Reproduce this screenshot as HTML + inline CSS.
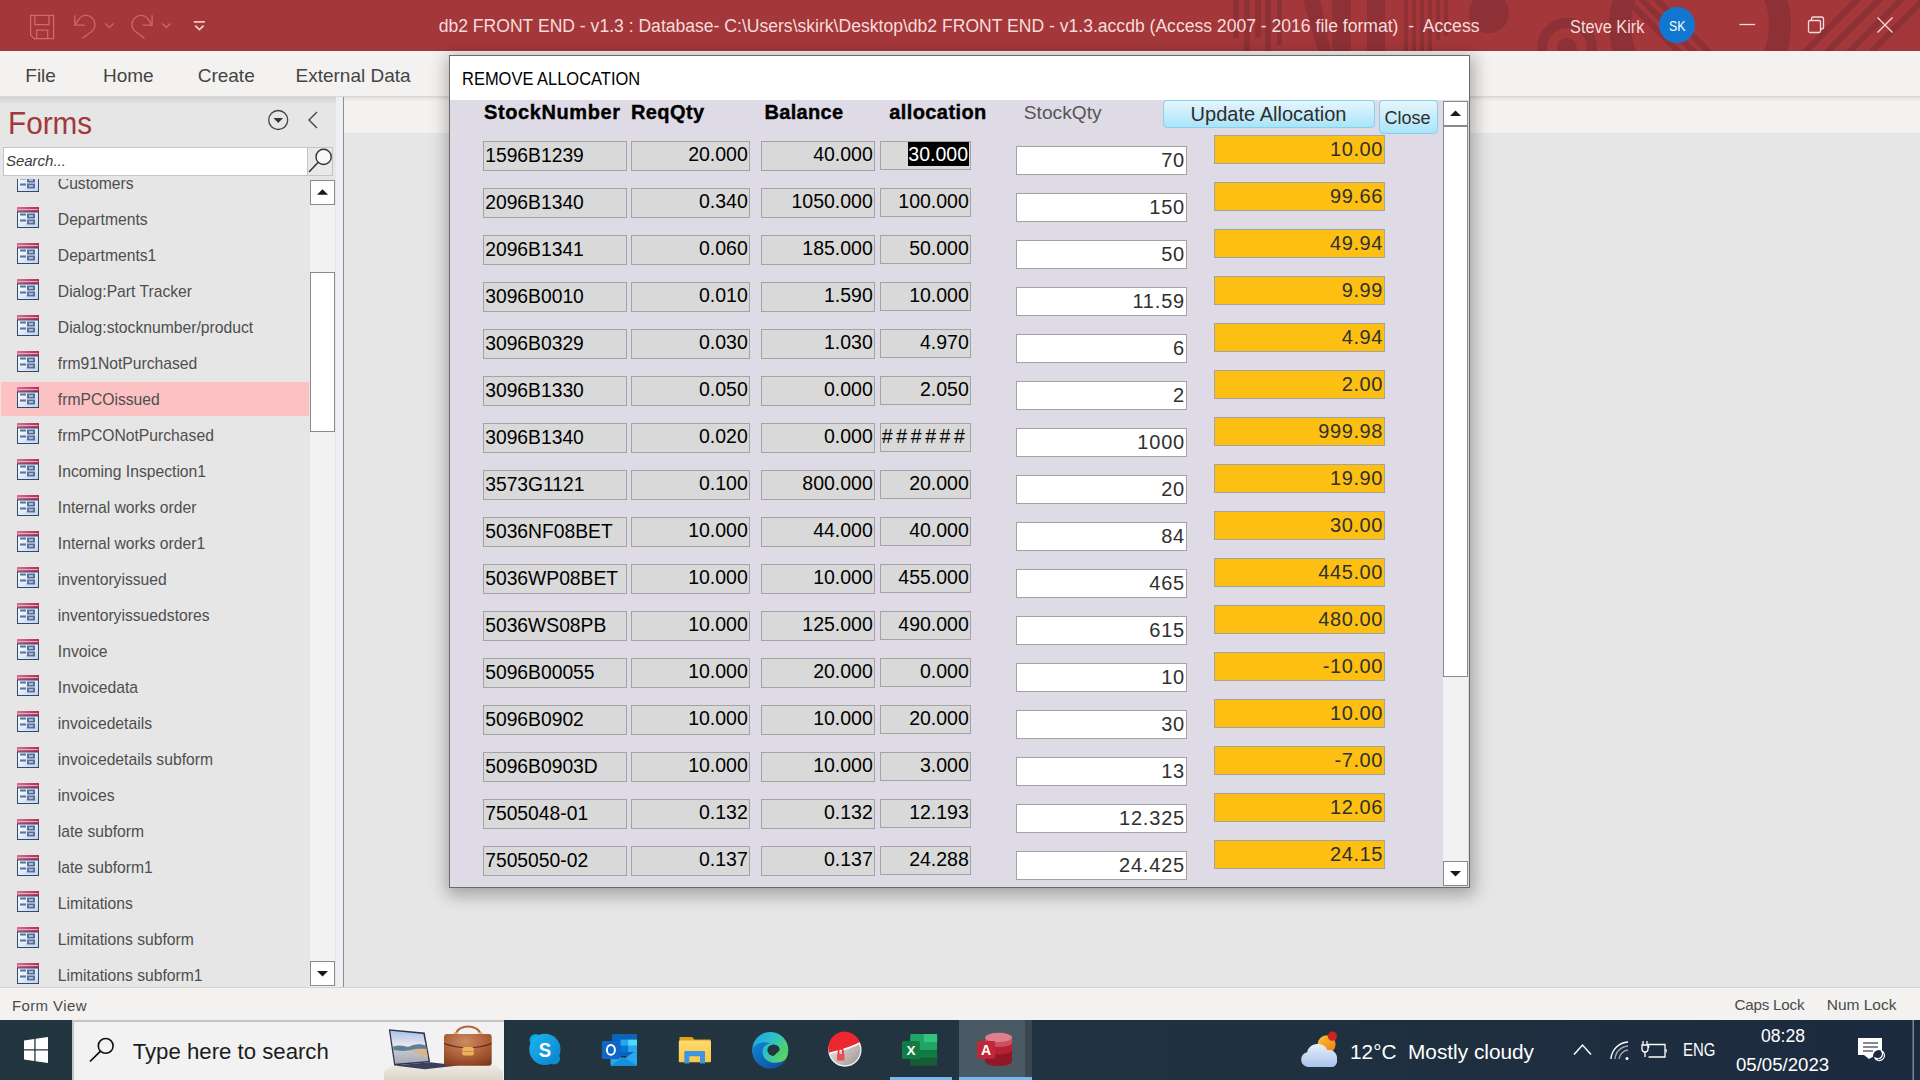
<!DOCTYPE html><html><head><meta charset="utf-8"><style>
html,body{margin:0;padding:0;width:1920px;height:1080px;overflow:hidden;background:#e6e6e6;}
body{position:relative;font-family:"Liberation Sans",sans-serif;}
.t{position:absolute;line-height:1;white-space:pre;}
.hb{-webkit-text-stroke:0.35px #000;}
.b{position:absolute;}
svg{position:absolute;}
</style></head><body>
<div class="b" style="left:0px;top:0px;width:1920px;height:51px;background:#a4373a;"></div>
<svg style="left:1200px;top:0" width="720" height="51" viewBox="0 0 720 51">
<g fill="#8d3136">
<rect x="33" y="0" width="6" height="38"/><rect x="44" y="0" width="6" height="51"/><rect x="55" y="0" width="6" height="38"/>
<rect x="65" y="0" width="6" height="51"/><rect x="77" y="0" width="5" height="45"/>
<path d="M103 0 L120 0 L131 51 L118 51 Z"/>
<rect x="132" y="0" width="19" height="51"/><rect x="167" y="0" width="18" height="51"/>
<rect x="204" y="0" width="4" height="51"/><rect x="212" y="0" width="4" height="51"/><rect x="220" y="0" width="4" height="51"/><rect x="228" y="0" width="4" height="51"/><rect x="236" y="0" width="4" height="40"/><rect x="244" y="0" width="4" height="36"/>
<circle cx="289" cy="13" r="20"/>
</g>
<g fill="none" stroke="#8d3136">
<circle cx="367" cy="48" r="25" stroke-width="10"/>
<circle cx="500" cy="25" r="80" stroke-width="22"/>
</g>
<g fill="#8d3136"><circle cx="367" cy="48" r="10"/></g>
<g stroke="#8d3136" stroke-width="6">
<line x1="425" y1="-2" x2="480" y2="53"/><line x1="440" y1="-2" x2="495" y2="53"/><line x1="455" y1="-2" x2="510" y2="53"/>
<line x1="659" y1="-2" x2="604" y2="53"/><line x1="681" y1="-2" x2="626" y2="53"/><line x1="703" y1="-2" x2="648" y2="53"/><line x1="725" y1="-2" x2="670" y2="53"/>
</g>
</svg>
<svg style="left:0;top:0" width="230" height="51" viewBox="0 0 230 51">
<g fill="none" stroke="#d8676a" stroke-width="1.25" stroke-linejoin="miter">
<path d="M30.6 15.4 H53.6 V38.6 H34.2 L30.6 35 Z"/><path d="M34.9 15.4 V24.6 H49 V15.4"/><path d="M36.7 38.6 V30.2 H47.7 V38.6"/>
<path d="M74.9 15.2 V25.1 H84.6"/><path d="M74.9 25.1 L79.6 18.1 A9 9 0 0 1 92.4 30.9 L82.5 38.3"/>
<path d="M105.2 23.5 L109.4 27.4 L113.5 23.5"/>
<path d="M152.1 15.2 V25.1 H142.4"/><path d="M152.1 25.1 L147.4 18.1 A9 9 0 0 0 134.6 30.9 L144.5 38.3"/>
<path d="M162.2 23.5 L166.4 27.4 L170.5 23.5"/>
</g>
<g fill="none" stroke="#f5d3d3" stroke-width="1.6"><line x1="193.8" y1="21.9" x2="204.9" y2="21.9"/><path d="M195.2 25.6 L199.4 29.6 L203.6 25.6"/></g>
</svg>
<div class="t" style="left:438.7px;top:18.4px;font-size:17.57px;color:#f6dcdc;">db2 FRONT END - v1.3 : Database- C:\Users\skirk\Desktop\db2 FRONT END - v1.3.accdb (Access 2007 - 2016 file format)  -  Access</div>
<div class="t" style="left:1569.7px;top:17.5px;font-size:18.30px;color:#f6dcdc;transform:scaleX(0.893);transform-origin:0 0;">Steve Kirk</div>
<div class="b" style="left:1659px;top:7px;width:36px;height:36px;border-radius:50%;background:#1177d1;"></div>
<div class="t" style="left:1668.7px;top:17.7px;font-size:15.00px;color:#ffffff;transform:scaleX(0.82);transform-origin:0 0;">SK</div>
<svg style="left:1720px;top:0" width="200" height="51" viewBox="0 0 200 51">
<g fill="none" stroke="#f6dcdc" stroke-width="1.3">
<line x1="19.5" y1="24.5" x2="35" y2="24.5"/>
<rect x="88.5" y="20.5" width="12" height="12" rx="1.5"/><path d="M91.5 20.5 v-1.5 a2 2 0 0 1 2 -2 h8 a2 2 0 0 1 2 2 v8 a2 2 0 0 1 -2 2 h-1"/>
<line x1="157.5" y1="17.5" x2="172.5" y2="32.5"/><line x1="172.5" y1="17.5" x2="157.5" y2="32.5"/>
</g></svg>
<div class="b" style="left:0px;top:51px;width:1920px;height:45px;background:#f3f2f1;"></div>
<div class="t" style="left:25.3px;top:65.8px;font-size:19.00px;color:#444444;">File</div>
<div class="t" style="left:103.0px;top:65.8px;font-size:19.00px;color:#444444;">Home</div>
<div class="t" style="left:197.7px;top:65.8px;font-size:19.00px;color:#444444;">Create</div>
<div class="t" style="left:295.5px;top:65.8px;font-size:19.00px;color:#444444;">External Data</div>
<div class="b" style="left:0px;top:96px;width:1920px;height:1px;background:#d9d8d7;"></div>
<div class="b" style="left:0px;top:97px;width:336px;height:890px;background:#e6e6e6;"></div>
<div class="b" style="left:0px;top:97px;width:336px;height:7px;background:linear-gradient(#d0d0d0,#e6e6e6);"></div>
<div class="b" style="left:336px;top:97px;width:7px;height:890px;background:#eeeff2;"></div>
<div class="b" style="left:343px;top:97px;width:1px;height:890px;background:#8b9099;"></div>
<div class="t" style="left:8.2px;top:108.2px;font-size:31.60px;color:#a4373a;transform:scaleX(0.94);transform-origin:0 0;">Forms</div>
<svg style="left:260px;top:102px" width="70" height="36" viewBox="0 0 70 36">
<circle cx="18.2" cy="18" r="9.5" fill="none" stroke="#444" stroke-width="1.3"/><path d="M13.5 16 h9.5 l-4.75 5 z" fill="#333"/>
<path d="M57 10 l-8 8 l8 8" fill="none" stroke="#444" stroke-width="1.4"/>
</svg>
<div class="b" style="left:3px;top:147px;width:305px;height:29px;background:#ffffff;box-shadow:inset 0 0 0 1px #c4c4c4;"></div>
<div class="b" style="left:307px;top:147px;width:26px;height:29px;background:#e9e9e9;box-shadow:inset 0 0 0 1px #c4c4c4;"></div>
<svg style="left:300px;top:140px" width="40" height="40" viewBox="0 0 40 40">
<circle cx="23.6" cy="16.9" r="7.6" fill="#f8f8f8" stroke="#333" stroke-width="1.4"/><line x1="18.2" y1="22.3" x2="9" y2="32" stroke="#333" stroke-width="1.5"/>
</svg>
<div class="t" style="left:5.9px;top:153.2px;font-size:15.00px;color:#3a3a3a;font-style:italic;">Search...</div>
<div class="b" style="left:0;top:179px;width:310px;height:808px;overflow:hidden;">
<svg width="22" height="21" viewBox="0 0 22 21" style="left:17px;top:-8px">
<defs><linearGradient id="ib" x1="0" y1="0" x2="1" y2="1"><stop offset="0" stop-color="#ffffff"/><stop offset="1" stop-color="#c3d3ee"/></linearGradient>
<linearGradient id="ip" x1="0" y1="0" x2="1" y2="0"><stop offset="0" stop-color="#d5718f"/><stop offset="1" stop-color="#b52a5a"/></linearGradient></defs>
<rect x="0" y="0" width="22" height="5" fill="url(#ip)"/><rect x="1" y="2" width="20" height="1" fill="#e8a8bd"/>
<rect x="0.5" y="5" width="21" height="15.5" fill="url(#ib)" stroke="#2f4a6e" stroke-width="1"/>
<rect x="3" y="6.5" width="6" height="2" fill="#56709c"/><rect x="3" y="12.5" width="6" height="2" fill="#56709c"/>
<rect x="10" y="6.5" width="8" height="5" fill="#56709c"/><rect x="12" y="8.5" width="4" height="1" fill="#fff"/>
<rect x="10" y="12.5" width="8" height="5" fill="#56709c"/><rect x="12" y="14.5" width="4" height="1" fill="#fff"/>
</svg>
<div class="t" style="left:57.8px;top:-3.3px;font-size:15.70px;color:#4e4e4e;">Customers</div>
<svg width="22" height="21" viewBox="0 0 22 21" style="left:17px;top:28px">
<defs><linearGradient id="ib" x1="0" y1="0" x2="1" y2="1"><stop offset="0" stop-color="#ffffff"/><stop offset="1" stop-color="#c3d3ee"/></linearGradient>
<linearGradient id="ip" x1="0" y1="0" x2="1" y2="0"><stop offset="0" stop-color="#d5718f"/><stop offset="1" stop-color="#b52a5a"/></linearGradient></defs>
<rect x="0" y="0" width="22" height="5" fill="url(#ip)"/><rect x="1" y="2" width="20" height="1" fill="#e8a8bd"/>
<rect x="0.5" y="5" width="21" height="15.5" fill="url(#ib)" stroke="#2f4a6e" stroke-width="1"/>
<rect x="3" y="6.5" width="6" height="2" fill="#56709c"/><rect x="3" y="12.5" width="6" height="2" fill="#56709c"/>
<rect x="10" y="6.5" width="8" height="5" fill="#56709c"/><rect x="12" y="8.5" width="4" height="1" fill="#fff"/>
<rect x="10" y="12.5" width="8" height="5" fill="#56709c"/><rect x="12" y="14.5" width="4" height="1" fill="#fff"/>
</svg>
<div class="t" style="left:57.8px;top:32.7px;font-size:15.70px;color:#4e4e4e;">Departments</div>
<svg width="22" height="21" viewBox="0 0 22 21" style="left:17px;top:64px">
<defs><linearGradient id="ib" x1="0" y1="0" x2="1" y2="1"><stop offset="0" stop-color="#ffffff"/><stop offset="1" stop-color="#c3d3ee"/></linearGradient>
<linearGradient id="ip" x1="0" y1="0" x2="1" y2="0"><stop offset="0" stop-color="#d5718f"/><stop offset="1" stop-color="#b52a5a"/></linearGradient></defs>
<rect x="0" y="0" width="22" height="5" fill="url(#ip)"/><rect x="1" y="2" width="20" height="1" fill="#e8a8bd"/>
<rect x="0.5" y="5" width="21" height="15.5" fill="url(#ib)" stroke="#2f4a6e" stroke-width="1"/>
<rect x="3" y="6.5" width="6" height="2" fill="#56709c"/><rect x="3" y="12.5" width="6" height="2" fill="#56709c"/>
<rect x="10" y="6.5" width="8" height="5" fill="#56709c"/><rect x="12" y="8.5" width="4" height="1" fill="#fff"/>
<rect x="10" y="12.5" width="8" height="5" fill="#56709c"/><rect x="12" y="14.5" width="4" height="1" fill="#fff"/>
</svg>
<div class="t" style="left:57.8px;top:68.7px;font-size:15.70px;color:#4e4e4e;">Departments1</div>
<svg width="22" height="21" viewBox="0 0 22 21" style="left:17px;top:100px">
<defs><linearGradient id="ib" x1="0" y1="0" x2="1" y2="1"><stop offset="0" stop-color="#ffffff"/><stop offset="1" stop-color="#c3d3ee"/></linearGradient>
<linearGradient id="ip" x1="0" y1="0" x2="1" y2="0"><stop offset="0" stop-color="#d5718f"/><stop offset="1" stop-color="#b52a5a"/></linearGradient></defs>
<rect x="0" y="0" width="22" height="5" fill="url(#ip)"/><rect x="1" y="2" width="20" height="1" fill="#e8a8bd"/>
<rect x="0.5" y="5" width="21" height="15.5" fill="url(#ib)" stroke="#2f4a6e" stroke-width="1"/>
<rect x="3" y="6.5" width="6" height="2" fill="#56709c"/><rect x="3" y="12.5" width="6" height="2" fill="#56709c"/>
<rect x="10" y="6.5" width="8" height="5" fill="#56709c"/><rect x="12" y="8.5" width="4" height="1" fill="#fff"/>
<rect x="10" y="12.5" width="8" height="5" fill="#56709c"/><rect x="12" y="14.5" width="4" height="1" fill="#fff"/>
</svg>
<div class="t" style="left:57.8px;top:104.7px;font-size:15.70px;color:#4e4e4e;">Dialog:Part Tracker</div>
<svg width="22" height="21" viewBox="0 0 22 21" style="left:17px;top:136px">
<defs><linearGradient id="ib" x1="0" y1="0" x2="1" y2="1"><stop offset="0" stop-color="#ffffff"/><stop offset="1" stop-color="#c3d3ee"/></linearGradient>
<linearGradient id="ip" x1="0" y1="0" x2="1" y2="0"><stop offset="0" stop-color="#d5718f"/><stop offset="1" stop-color="#b52a5a"/></linearGradient></defs>
<rect x="0" y="0" width="22" height="5" fill="url(#ip)"/><rect x="1" y="2" width="20" height="1" fill="#e8a8bd"/>
<rect x="0.5" y="5" width="21" height="15.5" fill="url(#ib)" stroke="#2f4a6e" stroke-width="1"/>
<rect x="3" y="6.5" width="6" height="2" fill="#56709c"/><rect x="3" y="12.5" width="6" height="2" fill="#56709c"/>
<rect x="10" y="6.5" width="8" height="5" fill="#56709c"/><rect x="12" y="8.5" width="4" height="1" fill="#fff"/>
<rect x="10" y="12.5" width="8" height="5" fill="#56709c"/><rect x="12" y="14.5" width="4" height="1" fill="#fff"/>
</svg>
<div class="t" style="left:57.8px;top:140.7px;font-size:15.70px;color:#4e4e4e;">Dialog:stocknumber/product</div>
<svg width="22" height="21" viewBox="0 0 22 21" style="left:17px;top:172px">
<defs><linearGradient id="ib" x1="0" y1="0" x2="1" y2="1"><stop offset="0" stop-color="#ffffff"/><stop offset="1" stop-color="#c3d3ee"/></linearGradient>
<linearGradient id="ip" x1="0" y1="0" x2="1" y2="0"><stop offset="0" stop-color="#d5718f"/><stop offset="1" stop-color="#b52a5a"/></linearGradient></defs>
<rect x="0" y="0" width="22" height="5" fill="url(#ip)"/><rect x="1" y="2" width="20" height="1" fill="#e8a8bd"/>
<rect x="0.5" y="5" width="21" height="15.5" fill="url(#ib)" stroke="#2f4a6e" stroke-width="1"/>
<rect x="3" y="6.5" width="6" height="2" fill="#56709c"/><rect x="3" y="12.5" width="6" height="2" fill="#56709c"/>
<rect x="10" y="6.5" width="8" height="5" fill="#56709c"/><rect x="12" y="8.5" width="4" height="1" fill="#fff"/>
<rect x="10" y="12.5" width="8" height="5" fill="#56709c"/><rect x="12" y="14.5" width="4" height="1" fill="#fff"/>
</svg>
<div class="t" style="left:57.8px;top:176.7px;font-size:15.70px;color:#4e4e4e;">frm91NotPurchased</div>
<div class="b" style="left:1px;top:203px;width:308px;height:34px;background:#fcc2c3;"></div>
<svg width="22" height="21" viewBox="0 0 22 21" style="left:17px;top:208px">
<defs><linearGradient id="ib" x1="0" y1="0" x2="1" y2="1"><stop offset="0" stop-color="#ffffff"/><stop offset="1" stop-color="#c3d3ee"/></linearGradient>
<linearGradient id="ip" x1="0" y1="0" x2="1" y2="0"><stop offset="0" stop-color="#d5718f"/><stop offset="1" stop-color="#b52a5a"/></linearGradient></defs>
<rect x="0" y="0" width="22" height="5" fill="url(#ip)"/><rect x="1" y="2" width="20" height="1" fill="#e8a8bd"/>
<rect x="0.5" y="5" width="21" height="15.5" fill="url(#ib)" stroke="#2f4a6e" stroke-width="1"/>
<rect x="3" y="6.5" width="6" height="2" fill="#56709c"/><rect x="3" y="12.5" width="6" height="2" fill="#56709c"/>
<rect x="10" y="6.5" width="8" height="5" fill="#56709c"/><rect x="12" y="8.5" width="4" height="1" fill="#fff"/>
<rect x="10" y="12.5" width="8" height="5" fill="#56709c"/><rect x="12" y="14.5" width="4" height="1" fill="#fff"/>
</svg>
<div class="t" style="left:57.8px;top:212.7px;font-size:15.70px;color:#4e4e4e;">frmPCOissued</div>
<svg width="22" height="21" viewBox="0 0 22 21" style="left:17px;top:244px">
<defs><linearGradient id="ib" x1="0" y1="0" x2="1" y2="1"><stop offset="0" stop-color="#ffffff"/><stop offset="1" stop-color="#c3d3ee"/></linearGradient>
<linearGradient id="ip" x1="0" y1="0" x2="1" y2="0"><stop offset="0" stop-color="#d5718f"/><stop offset="1" stop-color="#b52a5a"/></linearGradient></defs>
<rect x="0" y="0" width="22" height="5" fill="url(#ip)"/><rect x="1" y="2" width="20" height="1" fill="#e8a8bd"/>
<rect x="0.5" y="5" width="21" height="15.5" fill="url(#ib)" stroke="#2f4a6e" stroke-width="1"/>
<rect x="3" y="6.5" width="6" height="2" fill="#56709c"/><rect x="3" y="12.5" width="6" height="2" fill="#56709c"/>
<rect x="10" y="6.5" width="8" height="5" fill="#56709c"/><rect x="12" y="8.5" width="4" height="1" fill="#fff"/>
<rect x="10" y="12.5" width="8" height="5" fill="#56709c"/><rect x="12" y="14.5" width="4" height="1" fill="#fff"/>
</svg>
<div class="t" style="left:57.8px;top:248.7px;font-size:15.70px;color:#4e4e4e;">frmPCONotPurchased</div>
<svg width="22" height="21" viewBox="0 0 22 21" style="left:17px;top:280px">
<defs><linearGradient id="ib" x1="0" y1="0" x2="1" y2="1"><stop offset="0" stop-color="#ffffff"/><stop offset="1" stop-color="#c3d3ee"/></linearGradient>
<linearGradient id="ip" x1="0" y1="0" x2="1" y2="0"><stop offset="0" stop-color="#d5718f"/><stop offset="1" stop-color="#b52a5a"/></linearGradient></defs>
<rect x="0" y="0" width="22" height="5" fill="url(#ip)"/><rect x="1" y="2" width="20" height="1" fill="#e8a8bd"/>
<rect x="0.5" y="5" width="21" height="15.5" fill="url(#ib)" stroke="#2f4a6e" stroke-width="1"/>
<rect x="3" y="6.5" width="6" height="2" fill="#56709c"/><rect x="3" y="12.5" width="6" height="2" fill="#56709c"/>
<rect x="10" y="6.5" width="8" height="5" fill="#56709c"/><rect x="12" y="8.5" width="4" height="1" fill="#fff"/>
<rect x="10" y="12.5" width="8" height="5" fill="#56709c"/><rect x="12" y="14.5" width="4" height="1" fill="#fff"/>
</svg>
<div class="t" style="left:57.8px;top:284.7px;font-size:15.70px;color:#4e4e4e;">Incoming Inspection1</div>
<svg width="22" height="21" viewBox="0 0 22 21" style="left:17px;top:316px">
<defs><linearGradient id="ib" x1="0" y1="0" x2="1" y2="1"><stop offset="0" stop-color="#ffffff"/><stop offset="1" stop-color="#c3d3ee"/></linearGradient>
<linearGradient id="ip" x1="0" y1="0" x2="1" y2="0"><stop offset="0" stop-color="#d5718f"/><stop offset="1" stop-color="#b52a5a"/></linearGradient></defs>
<rect x="0" y="0" width="22" height="5" fill="url(#ip)"/><rect x="1" y="2" width="20" height="1" fill="#e8a8bd"/>
<rect x="0.5" y="5" width="21" height="15.5" fill="url(#ib)" stroke="#2f4a6e" stroke-width="1"/>
<rect x="3" y="6.5" width="6" height="2" fill="#56709c"/><rect x="3" y="12.5" width="6" height="2" fill="#56709c"/>
<rect x="10" y="6.5" width="8" height="5" fill="#56709c"/><rect x="12" y="8.5" width="4" height="1" fill="#fff"/>
<rect x="10" y="12.5" width="8" height="5" fill="#56709c"/><rect x="12" y="14.5" width="4" height="1" fill="#fff"/>
</svg>
<div class="t" style="left:57.8px;top:320.7px;font-size:15.70px;color:#4e4e4e;">Internal works order</div>
<svg width="22" height="21" viewBox="0 0 22 21" style="left:17px;top:352px">
<defs><linearGradient id="ib" x1="0" y1="0" x2="1" y2="1"><stop offset="0" stop-color="#ffffff"/><stop offset="1" stop-color="#c3d3ee"/></linearGradient>
<linearGradient id="ip" x1="0" y1="0" x2="1" y2="0"><stop offset="0" stop-color="#d5718f"/><stop offset="1" stop-color="#b52a5a"/></linearGradient></defs>
<rect x="0" y="0" width="22" height="5" fill="url(#ip)"/><rect x="1" y="2" width="20" height="1" fill="#e8a8bd"/>
<rect x="0.5" y="5" width="21" height="15.5" fill="url(#ib)" stroke="#2f4a6e" stroke-width="1"/>
<rect x="3" y="6.5" width="6" height="2" fill="#56709c"/><rect x="3" y="12.5" width="6" height="2" fill="#56709c"/>
<rect x="10" y="6.5" width="8" height="5" fill="#56709c"/><rect x="12" y="8.5" width="4" height="1" fill="#fff"/>
<rect x="10" y="12.5" width="8" height="5" fill="#56709c"/><rect x="12" y="14.5" width="4" height="1" fill="#fff"/>
</svg>
<div class="t" style="left:57.8px;top:356.7px;font-size:15.70px;color:#4e4e4e;">Internal works order1</div>
<svg width="22" height="21" viewBox="0 0 22 21" style="left:17px;top:388px">
<defs><linearGradient id="ib" x1="0" y1="0" x2="1" y2="1"><stop offset="0" stop-color="#ffffff"/><stop offset="1" stop-color="#c3d3ee"/></linearGradient>
<linearGradient id="ip" x1="0" y1="0" x2="1" y2="0"><stop offset="0" stop-color="#d5718f"/><stop offset="1" stop-color="#b52a5a"/></linearGradient></defs>
<rect x="0" y="0" width="22" height="5" fill="url(#ip)"/><rect x="1" y="2" width="20" height="1" fill="#e8a8bd"/>
<rect x="0.5" y="5" width="21" height="15.5" fill="url(#ib)" stroke="#2f4a6e" stroke-width="1"/>
<rect x="3" y="6.5" width="6" height="2" fill="#56709c"/><rect x="3" y="12.5" width="6" height="2" fill="#56709c"/>
<rect x="10" y="6.5" width="8" height="5" fill="#56709c"/><rect x="12" y="8.5" width="4" height="1" fill="#fff"/>
<rect x="10" y="12.5" width="8" height="5" fill="#56709c"/><rect x="12" y="14.5" width="4" height="1" fill="#fff"/>
</svg>
<div class="t" style="left:57.8px;top:392.7px;font-size:15.70px;color:#4e4e4e;">inventoryissued</div>
<svg width="22" height="21" viewBox="0 0 22 21" style="left:17px;top:424px">
<defs><linearGradient id="ib" x1="0" y1="0" x2="1" y2="1"><stop offset="0" stop-color="#ffffff"/><stop offset="1" stop-color="#c3d3ee"/></linearGradient>
<linearGradient id="ip" x1="0" y1="0" x2="1" y2="0"><stop offset="0" stop-color="#d5718f"/><stop offset="1" stop-color="#b52a5a"/></linearGradient></defs>
<rect x="0" y="0" width="22" height="5" fill="url(#ip)"/><rect x="1" y="2" width="20" height="1" fill="#e8a8bd"/>
<rect x="0.5" y="5" width="21" height="15.5" fill="url(#ib)" stroke="#2f4a6e" stroke-width="1"/>
<rect x="3" y="6.5" width="6" height="2" fill="#56709c"/><rect x="3" y="12.5" width="6" height="2" fill="#56709c"/>
<rect x="10" y="6.5" width="8" height="5" fill="#56709c"/><rect x="12" y="8.5" width="4" height="1" fill="#fff"/>
<rect x="10" y="12.5" width="8" height="5" fill="#56709c"/><rect x="12" y="14.5" width="4" height="1" fill="#fff"/>
</svg>
<div class="t" style="left:57.8px;top:428.7px;font-size:15.70px;color:#4e4e4e;">inventoryissuedstores</div>
<svg width="22" height="21" viewBox="0 0 22 21" style="left:17px;top:460px">
<defs><linearGradient id="ib" x1="0" y1="0" x2="1" y2="1"><stop offset="0" stop-color="#ffffff"/><stop offset="1" stop-color="#c3d3ee"/></linearGradient>
<linearGradient id="ip" x1="0" y1="0" x2="1" y2="0"><stop offset="0" stop-color="#d5718f"/><stop offset="1" stop-color="#b52a5a"/></linearGradient></defs>
<rect x="0" y="0" width="22" height="5" fill="url(#ip)"/><rect x="1" y="2" width="20" height="1" fill="#e8a8bd"/>
<rect x="0.5" y="5" width="21" height="15.5" fill="url(#ib)" stroke="#2f4a6e" stroke-width="1"/>
<rect x="3" y="6.5" width="6" height="2" fill="#56709c"/><rect x="3" y="12.5" width="6" height="2" fill="#56709c"/>
<rect x="10" y="6.5" width="8" height="5" fill="#56709c"/><rect x="12" y="8.5" width="4" height="1" fill="#fff"/>
<rect x="10" y="12.5" width="8" height="5" fill="#56709c"/><rect x="12" y="14.5" width="4" height="1" fill="#fff"/>
</svg>
<div class="t" style="left:57.8px;top:464.7px;font-size:15.70px;color:#4e4e4e;">Invoice</div>
<svg width="22" height="21" viewBox="0 0 22 21" style="left:17px;top:496px">
<defs><linearGradient id="ib" x1="0" y1="0" x2="1" y2="1"><stop offset="0" stop-color="#ffffff"/><stop offset="1" stop-color="#c3d3ee"/></linearGradient>
<linearGradient id="ip" x1="0" y1="0" x2="1" y2="0"><stop offset="0" stop-color="#d5718f"/><stop offset="1" stop-color="#b52a5a"/></linearGradient></defs>
<rect x="0" y="0" width="22" height="5" fill="url(#ip)"/><rect x="1" y="2" width="20" height="1" fill="#e8a8bd"/>
<rect x="0.5" y="5" width="21" height="15.5" fill="url(#ib)" stroke="#2f4a6e" stroke-width="1"/>
<rect x="3" y="6.5" width="6" height="2" fill="#56709c"/><rect x="3" y="12.5" width="6" height="2" fill="#56709c"/>
<rect x="10" y="6.5" width="8" height="5" fill="#56709c"/><rect x="12" y="8.5" width="4" height="1" fill="#fff"/>
<rect x="10" y="12.5" width="8" height="5" fill="#56709c"/><rect x="12" y="14.5" width="4" height="1" fill="#fff"/>
</svg>
<div class="t" style="left:57.8px;top:500.7px;font-size:15.70px;color:#4e4e4e;">Invoicedata</div>
<svg width="22" height="21" viewBox="0 0 22 21" style="left:17px;top:532px">
<defs><linearGradient id="ib" x1="0" y1="0" x2="1" y2="1"><stop offset="0" stop-color="#ffffff"/><stop offset="1" stop-color="#c3d3ee"/></linearGradient>
<linearGradient id="ip" x1="0" y1="0" x2="1" y2="0"><stop offset="0" stop-color="#d5718f"/><stop offset="1" stop-color="#b52a5a"/></linearGradient></defs>
<rect x="0" y="0" width="22" height="5" fill="url(#ip)"/><rect x="1" y="2" width="20" height="1" fill="#e8a8bd"/>
<rect x="0.5" y="5" width="21" height="15.5" fill="url(#ib)" stroke="#2f4a6e" stroke-width="1"/>
<rect x="3" y="6.5" width="6" height="2" fill="#56709c"/><rect x="3" y="12.5" width="6" height="2" fill="#56709c"/>
<rect x="10" y="6.5" width="8" height="5" fill="#56709c"/><rect x="12" y="8.5" width="4" height="1" fill="#fff"/>
<rect x="10" y="12.5" width="8" height="5" fill="#56709c"/><rect x="12" y="14.5" width="4" height="1" fill="#fff"/>
</svg>
<div class="t" style="left:57.8px;top:536.7px;font-size:15.70px;color:#4e4e4e;">invoicedetails</div>
<svg width="22" height="21" viewBox="0 0 22 21" style="left:17px;top:568px">
<defs><linearGradient id="ib" x1="0" y1="0" x2="1" y2="1"><stop offset="0" stop-color="#ffffff"/><stop offset="1" stop-color="#c3d3ee"/></linearGradient>
<linearGradient id="ip" x1="0" y1="0" x2="1" y2="0"><stop offset="0" stop-color="#d5718f"/><stop offset="1" stop-color="#b52a5a"/></linearGradient></defs>
<rect x="0" y="0" width="22" height="5" fill="url(#ip)"/><rect x="1" y="2" width="20" height="1" fill="#e8a8bd"/>
<rect x="0.5" y="5" width="21" height="15.5" fill="url(#ib)" stroke="#2f4a6e" stroke-width="1"/>
<rect x="3" y="6.5" width="6" height="2" fill="#56709c"/><rect x="3" y="12.5" width="6" height="2" fill="#56709c"/>
<rect x="10" y="6.5" width="8" height="5" fill="#56709c"/><rect x="12" y="8.5" width="4" height="1" fill="#fff"/>
<rect x="10" y="12.5" width="8" height="5" fill="#56709c"/><rect x="12" y="14.5" width="4" height="1" fill="#fff"/>
</svg>
<div class="t" style="left:57.8px;top:572.7px;font-size:15.70px;color:#4e4e4e;">invoicedetails subform</div>
<svg width="22" height="21" viewBox="0 0 22 21" style="left:17px;top:604px">
<defs><linearGradient id="ib" x1="0" y1="0" x2="1" y2="1"><stop offset="0" stop-color="#ffffff"/><stop offset="1" stop-color="#c3d3ee"/></linearGradient>
<linearGradient id="ip" x1="0" y1="0" x2="1" y2="0"><stop offset="0" stop-color="#d5718f"/><stop offset="1" stop-color="#b52a5a"/></linearGradient></defs>
<rect x="0" y="0" width="22" height="5" fill="url(#ip)"/><rect x="1" y="2" width="20" height="1" fill="#e8a8bd"/>
<rect x="0.5" y="5" width="21" height="15.5" fill="url(#ib)" stroke="#2f4a6e" stroke-width="1"/>
<rect x="3" y="6.5" width="6" height="2" fill="#56709c"/><rect x="3" y="12.5" width="6" height="2" fill="#56709c"/>
<rect x="10" y="6.5" width="8" height="5" fill="#56709c"/><rect x="12" y="8.5" width="4" height="1" fill="#fff"/>
<rect x="10" y="12.5" width="8" height="5" fill="#56709c"/><rect x="12" y="14.5" width="4" height="1" fill="#fff"/>
</svg>
<div class="t" style="left:57.8px;top:608.7px;font-size:15.70px;color:#4e4e4e;">invoices</div>
<svg width="22" height="21" viewBox="0 0 22 21" style="left:17px;top:640px">
<defs><linearGradient id="ib" x1="0" y1="0" x2="1" y2="1"><stop offset="0" stop-color="#ffffff"/><stop offset="1" stop-color="#c3d3ee"/></linearGradient>
<linearGradient id="ip" x1="0" y1="0" x2="1" y2="0"><stop offset="0" stop-color="#d5718f"/><stop offset="1" stop-color="#b52a5a"/></linearGradient></defs>
<rect x="0" y="0" width="22" height="5" fill="url(#ip)"/><rect x="1" y="2" width="20" height="1" fill="#e8a8bd"/>
<rect x="0.5" y="5" width="21" height="15.5" fill="url(#ib)" stroke="#2f4a6e" stroke-width="1"/>
<rect x="3" y="6.5" width="6" height="2" fill="#56709c"/><rect x="3" y="12.5" width="6" height="2" fill="#56709c"/>
<rect x="10" y="6.5" width="8" height="5" fill="#56709c"/><rect x="12" y="8.5" width="4" height="1" fill="#fff"/>
<rect x="10" y="12.5" width="8" height="5" fill="#56709c"/><rect x="12" y="14.5" width="4" height="1" fill="#fff"/>
</svg>
<div class="t" style="left:57.8px;top:644.7px;font-size:15.70px;color:#4e4e4e;">late subform</div>
<svg width="22" height="21" viewBox="0 0 22 21" style="left:17px;top:676px">
<defs><linearGradient id="ib" x1="0" y1="0" x2="1" y2="1"><stop offset="0" stop-color="#ffffff"/><stop offset="1" stop-color="#c3d3ee"/></linearGradient>
<linearGradient id="ip" x1="0" y1="0" x2="1" y2="0"><stop offset="0" stop-color="#d5718f"/><stop offset="1" stop-color="#b52a5a"/></linearGradient></defs>
<rect x="0" y="0" width="22" height="5" fill="url(#ip)"/><rect x="1" y="2" width="20" height="1" fill="#e8a8bd"/>
<rect x="0.5" y="5" width="21" height="15.5" fill="url(#ib)" stroke="#2f4a6e" stroke-width="1"/>
<rect x="3" y="6.5" width="6" height="2" fill="#56709c"/><rect x="3" y="12.5" width="6" height="2" fill="#56709c"/>
<rect x="10" y="6.5" width="8" height="5" fill="#56709c"/><rect x="12" y="8.5" width="4" height="1" fill="#fff"/>
<rect x="10" y="12.5" width="8" height="5" fill="#56709c"/><rect x="12" y="14.5" width="4" height="1" fill="#fff"/>
</svg>
<div class="t" style="left:57.8px;top:680.7px;font-size:15.70px;color:#4e4e4e;">late subform1</div>
<svg width="22" height="21" viewBox="0 0 22 21" style="left:17px;top:712px">
<defs><linearGradient id="ib" x1="0" y1="0" x2="1" y2="1"><stop offset="0" stop-color="#ffffff"/><stop offset="1" stop-color="#c3d3ee"/></linearGradient>
<linearGradient id="ip" x1="0" y1="0" x2="1" y2="0"><stop offset="0" stop-color="#d5718f"/><stop offset="1" stop-color="#b52a5a"/></linearGradient></defs>
<rect x="0" y="0" width="22" height="5" fill="url(#ip)"/><rect x="1" y="2" width="20" height="1" fill="#e8a8bd"/>
<rect x="0.5" y="5" width="21" height="15.5" fill="url(#ib)" stroke="#2f4a6e" stroke-width="1"/>
<rect x="3" y="6.5" width="6" height="2" fill="#56709c"/><rect x="3" y="12.5" width="6" height="2" fill="#56709c"/>
<rect x="10" y="6.5" width="8" height="5" fill="#56709c"/><rect x="12" y="8.5" width="4" height="1" fill="#fff"/>
<rect x="10" y="12.5" width="8" height="5" fill="#56709c"/><rect x="12" y="14.5" width="4" height="1" fill="#fff"/>
</svg>
<div class="t" style="left:57.8px;top:716.7px;font-size:15.70px;color:#4e4e4e;">Limitations</div>
<svg width="22" height="21" viewBox="0 0 22 21" style="left:17px;top:748px">
<defs><linearGradient id="ib" x1="0" y1="0" x2="1" y2="1"><stop offset="0" stop-color="#ffffff"/><stop offset="1" stop-color="#c3d3ee"/></linearGradient>
<linearGradient id="ip" x1="0" y1="0" x2="1" y2="0"><stop offset="0" stop-color="#d5718f"/><stop offset="1" stop-color="#b52a5a"/></linearGradient></defs>
<rect x="0" y="0" width="22" height="5" fill="url(#ip)"/><rect x="1" y="2" width="20" height="1" fill="#e8a8bd"/>
<rect x="0.5" y="5" width="21" height="15.5" fill="url(#ib)" stroke="#2f4a6e" stroke-width="1"/>
<rect x="3" y="6.5" width="6" height="2" fill="#56709c"/><rect x="3" y="12.5" width="6" height="2" fill="#56709c"/>
<rect x="10" y="6.5" width="8" height="5" fill="#56709c"/><rect x="12" y="8.5" width="4" height="1" fill="#fff"/>
<rect x="10" y="12.5" width="8" height="5" fill="#56709c"/><rect x="12" y="14.5" width="4" height="1" fill="#fff"/>
</svg>
<div class="t" style="left:57.8px;top:752.7px;font-size:15.70px;color:#4e4e4e;">Limitations subform</div>
<svg width="22" height="21" viewBox="0 0 22 21" style="left:17px;top:784px">
<defs><linearGradient id="ib" x1="0" y1="0" x2="1" y2="1"><stop offset="0" stop-color="#ffffff"/><stop offset="1" stop-color="#c3d3ee"/></linearGradient>
<linearGradient id="ip" x1="0" y1="0" x2="1" y2="0"><stop offset="0" stop-color="#d5718f"/><stop offset="1" stop-color="#b52a5a"/></linearGradient></defs>
<rect x="0" y="0" width="22" height="5" fill="url(#ip)"/><rect x="1" y="2" width="20" height="1" fill="#e8a8bd"/>
<rect x="0.5" y="5" width="21" height="15.5" fill="url(#ib)" stroke="#2f4a6e" stroke-width="1"/>
<rect x="3" y="6.5" width="6" height="2" fill="#56709c"/><rect x="3" y="12.5" width="6" height="2" fill="#56709c"/>
<rect x="10" y="6.5" width="8" height="5" fill="#56709c"/><rect x="12" y="8.5" width="4" height="1" fill="#fff"/>
<rect x="10" y="12.5" width="8" height="5" fill="#56709c"/><rect x="12" y="14.5" width="4" height="1" fill="#fff"/>
</svg>
<div class="t" style="left:57.8px;top:788.7px;font-size:15.70px;color:#4e4e4e;">Limitations subform1</div>
</div>
<div class="b" style="left:310px;top:180px;width:25px;height:807px;background:#f2f2f2;"></div>
<div class="b" style="left:310px;top:180px;width:25px;height:25px;background:#ffffff;box-shadow:inset 0 0 0 1px #8a8a8a;"></div>
<svg style="left:310px;top:180px" width="25" height="25" viewBox="0 0 25 25"><path d="M7 14.8 h11 l-5.5 -5.5 z" fill="#1a1a1a"/></svg>
<div class="b" style="left:310px;top:272px;width:25px;height:160px;background:#ffffff;box-shadow:inset 0 0 0 1px #8a8a8a;"></div>
<div class="b" style="left:310px;top:961px;width:25px;height:25px;background:#ffffff;box-shadow:inset 0 0 0 1px #8a8a8a;"></div>
<svg style="left:310px;top:961px" width="25" height="25" viewBox="0 0 25 25"><path d="M7 10 h11 l-5.5 5.5 z" fill="#1a1a1a"/></svg>
<div class="b" style="left:344px;top:97px;width:1576px;height:36px;background:#f3f2f1;"></div>
<div class="b" style="left:344px;top:97px;width:1576px;height:4px;background:linear-gradient(#e0dfde,#f3f2f1);"></div>
<div class="b" style="left:449px;top:55px;width:1021px;height:833px;box-shadow:1px 4px 16px 3px rgba(0,0,0,0.30);background:#6b6b6b;"></div>
<div class="b" style="left:450px;top:56px;width:1019px;height:44px;background:#ffffff;"></div>
<div class="b" style="left:450px;top:100px;width:1019px;height:787px;background:#dfdbe6;"></div>
<div class="t" style="left:461.5px;top:70.0px;font-size:18.00px;color:#000;transform:scaleX(0.915);transform-origin:0 0;">REMOVE ALLOCATION</div>
<div class="t" style="left:484.0px;top:101.8px;font-size:20.00px;color:#000;font-weight:bold;letter-spacing:0.60px;-webkit-text-stroke:0.4px #000;">StockNumber</div>
<div class="t" style="left:631.0px;top:101.8px;font-size:20.00px;color:#000;font-weight:bold;letter-spacing:0.40px;-webkit-text-stroke:0.4px #000;">ReqQty</div>
<div class="t" style="left:764.6px;top:101.8px;font-size:20.00px;color:#000;font-weight:bold;letter-spacing:0.30px;-webkit-text-stroke:0.4px #000;">Balance</div>
<div class="t" style="left:889.3px;top:101.8px;font-size:20.00px;color:#000;font-weight:bold;letter-spacing:0.40px;-webkit-text-stroke:0.4px #000;">allocation</div>
<div class="t" style="left:1023.8px;top:102.5px;font-size:19.20px;color:#555555;">StockQty</div>
<div class="b" style="left:1163px;top:100px;width:212px;height:28px;border:1px solid #86d0f0;box-sizing:border-box;border-radius:4px;background:linear-gradient(#e6f5fc,#a9e4f9);"></div>
<div class="t" style="left:1190.6px;top:103.6px;font-size:20.04px;color:#2e2e2e;">Update Allocation</div>
<div class="b" style="left:1379px;top:100px;width:59px;height:34px;border:1px solid #86d0f0;box-sizing:border-box;border-radius:4px;background:linear-gradient(#e6f5fc,#a9e4f9);"></div>
<div class="t" style="left:1384.4px;top:108.5px;font-size:18.00px;color:#2e2e2e;">Close</div>
<div class="b" style="left:483px;top:141px;width:144px;height:30px;background:#d9d9d9;box-shadow:inset 0 0 0 1px #a3a3a3;"></div>
<div class="b" style="left:631px;top:141px;width:119px;height:30px;background:#d9d9d9;box-shadow:inset 0 0 0 1px #a3a3a3;"></div>
<div class="b" style="left:761px;top:141px;width:114px;height:30px;background:#d9d9d9;box-shadow:inset 0 0 0 1px #a3a3a3;"></div>
<div class="b" style="left:880px;top:141px;width:91px;height:29px;background:#d9d9d9;box-shadow:inset 0 0 0 1px #a3a3a3;"></div>
<div class="b" style="left:1016px;top:146px;width:171px;height:29px;background:#ffffff;box-shadow:inset 0 0 0 1px #a3a3a3;"></div>
<div class="b" style="left:1214px;top:135px;width:171px;height:29px;background:#fdc012;box-shadow:inset 0 0 0 1px #a3a3a3;"></div>
<div class="t" style="left:485.2px;top:145.6px;font-size:19.30px;color:#000;">1596B1239</div>
<div class="t" style="right:1172.2px;top:145.4px;font-size:19.50px;color:#000;">20.000</div>
<div class="t" style="right:1047.2px;top:145.4px;font-size:19.50px;color:#000;">40.000</div>
<div class="b" style="left:908px;top:142px;width:61px;height:24px;background:#000000;"></div>
<div class="t" style="right:952.0px;top:145.4px;font-size:19.50px;color:#ffffff;">30.000</div>
<div class="t" style="right:735.0px;top:150.0px;font-size:20.00px;color:#303030;letter-spacing:0.80px;">70</div>
<div class="t" style="right:537.0px;top:139.0px;font-size:20.00px;color:#303030;letter-spacing:0.60px;">10.00</div>
<div class="b" style="left:483px;top:188px;width:144px;height:30px;background:#d9d9d9;box-shadow:inset 0 0 0 1px #a3a3a3;"></div>
<div class="b" style="left:631px;top:188px;width:119px;height:30px;background:#d9d9d9;box-shadow:inset 0 0 0 1px #a3a3a3;"></div>
<div class="b" style="left:761px;top:188px;width:114px;height:30px;background:#d9d9d9;box-shadow:inset 0 0 0 1px #a3a3a3;"></div>
<div class="b" style="left:880px;top:188px;width:91px;height:29px;background:#d9d9d9;box-shadow:inset 0 0 0 1px #a3a3a3;"></div>
<div class="b" style="left:1016px;top:193px;width:171px;height:29px;background:#ffffff;box-shadow:inset 0 0 0 1px #a3a3a3;"></div>
<div class="b" style="left:1214px;top:182px;width:171px;height:29px;background:#fdc012;box-shadow:inset 0 0 0 1px #a3a3a3;"></div>
<div class="t" style="left:485.2px;top:192.6px;font-size:19.30px;color:#000;">2096B1340</div>
<div class="t" style="right:1172.2px;top:192.4px;font-size:19.50px;color:#000;">0.340</div>
<div class="t" style="right:1047.2px;top:192.4px;font-size:19.50px;color:#000;">1050.000</div>
<div class="t" style="right:951.2px;top:192.4px;font-size:19.50px;color:#000;">100.000</div>
<div class="t" style="right:735.0px;top:197.0px;font-size:20.00px;color:#303030;letter-spacing:0.80px;">150</div>
<div class="t" style="right:537.0px;top:186.0px;font-size:20.00px;color:#303030;letter-spacing:0.60px;">99.66</div>
<div class="b" style="left:483px;top:235px;width:144px;height:30px;background:#d9d9d9;box-shadow:inset 0 0 0 1px #a3a3a3;"></div>
<div class="b" style="left:631px;top:235px;width:119px;height:30px;background:#d9d9d9;box-shadow:inset 0 0 0 1px #a3a3a3;"></div>
<div class="b" style="left:761px;top:235px;width:114px;height:30px;background:#d9d9d9;box-shadow:inset 0 0 0 1px #a3a3a3;"></div>
<div class="b" style="left:880px;top:235px;width:91px;height:29px;background:#d9d9d9;box-shadow:inset 0 0 0 1px #a3a3a3;"></div>
<div class="b" style="left:1016px;top:240px;width:171px;height:29px;background:#ffffff;box-shadow:inset 0 0 0 1px #a3a3a3;"></div>
<div class="b" style="left:1214px;top:229px;width:171px;height:29px;background:#fdc012;box-shadow:inset 0 0 0 1px #a3a3a3;"></div>
<div class="t" style="left:485.2px;top:239.6px;font-size:19.30px;color:#000;">2096B1341</div>
<div class="t" style="right:1172.2px;top:239.4px;font-size:19.50px;color:#000;">0.060</div>
<div class="t" style="right:1047.2px;top:239.4px;font-size:19.50px;color:#000;">185.000</div>
<div class="t" style="right:951.2px;top:239.4px;font-size:19.50px;color:#000;">50.000</div>
<div class="t" style="right:735.0px;top:244.0px;font-size:20.00px;color:#303030;letter-spacing:0.80px;">50</div>
<div class="t" style="right:537.0px;top:233.0px;font-size:20.00px;color:#303030;letter-spacing:0.60px;">49.94</div>
<div class="b" style="left:483px;top:282px;width:144px;height:30px;background:#d9d9d9;box-shadow:inset 0 0 0 1px #a3a3a3;"></div>
<div class="b" style="left:631px;top:282px;width:119px;height:30px;background:#d9d9d9;box-shadow:inset 0 0 0 1px #a3a3a3;"></div>
<div class="b" style="left:761px;top:282px;width:114px;height:30px;background:#d9d9d9;box-shadow:inset 0 0 0 1px #a3a3a3;"></div>
<div class="b" style="left:880px;top:282px;width:91px;height:29px;background:#d9d9d9;box-shadow:inset 0 0 0 1px #a3a3a3;"></div>
<div class="b" style="left:1016px;top:287px;width:171px;height:29px;background:#ffffff;box-shadow:inset 0 0 0 1px #a3a3a3;"></div>
<div class="b" style="left:1214px;top:276px;width:171px;height:29px;background:#fdc012;box-shadow:inset 0 0 0 1px #a3a3a3;"></div>
<div class="t" style="left:485.2px;top:286.6px;font-size:19.30px;color:#000;">3096B0010</div>
<div class="t" style="right:1172.2px;top:286.4px;font-size:19.50px;color:#000;">0.010</div>
<div class="t" style="right:1047.2px;top:286.4px;font-size:19.50px;color:#000;">1.590</div>
<div class="t" style="right:951.2px;top:286.4px;font-size:19.50px;color:#000;">10.000</div>
<div class="t" style="right:735.0px;top:291.0px;font-size:20.00px;color:#303030;letter-spacing:0.80px;">11.59</div>
<div class="t" style="right:537.0px;top:280.0px;font-size:20.00px;color:#303030;letter-spacing:0.60px;">9.99</div>
<div class="b" style="left:483px;top:329px;width:144px;height:30px;background:#d9d9d9;box-shadow:inset 0 0 0 1px #a3a3a3;"></div>
<div class="b" style="left:631px;top:329px;width:119px;height:30px;background:#d9d9d9;box-shadow:inset 0 0 0 1px #a3a3a3;"></div>
<div class="b" style="left:761px;top:329px;width:114px;height:30px;background:#d9d9d9;box-shadow:inset 0 0 0 1px #a3a3a3;"></div>
<div class="b" style="left:880px;top:329px;width:91px;height:29px;background:#d9d9d9;box-shadow:inset 0 0 0 1px #a3a3a3;"></div>
<div class="b" style="left:1016px;top:334px;width:171px;height:29px;background:#ffffff;box-shadow:inset 0 0 0 1px #a3a3a3;"></div>
<div class="b" style="left:1214px;top:323px;width:171px;height:29px;background:#fdc012;box-shadow:inset 0 0 0 1px #a3a3a3;"></div>
<div class="t" style="left:485.2px;top:333.6px;font-size:19.30px;color:#000;">3096B0329</div>
<div class="t" style="right:1172.2px;top:333.4px;font-size:19.50px;color:#000;">0.030</div>
<div class="t" style="right:1047.2px;top:333.4px;font-size:19.50px;color:#000;">1.030</div>
<div class="t" style="right:951.2px;top:333.4px;font-size:19.50px;color:#000;">4.970</div>
<div class="t" style="right:735.0px;top:338.0px;font-size:20.00px;color:#303030;letter-spacing:0.80px;">6</div>
<div class="t" style="right:537.0px;top:327.0px;font-size:20.00px;color:#303030;letter-spacing:0.60px;">4.94</div>
<div class="b" style="left:483px;top:376px;width:144px;height:30px;background:#d9d9d9;box-shadow:inset 0 0 0 1px #a3a3a3;"></div>
<div class="b" style="left:631px;top:376px;width:119px;height:30px;background:#d9d9d9;box-shadow:inset 0 0 0 1px #a3a3a3;"></div>
<div class="b" style="left:761px;top:376px;width:114px;height:30px;background:#d9d9d9;box-shadow:inset 0 0 0 1px #a3a3a3;"></div>
<div class="b" style="left:880px;top:376px;width:91px;height:29px;background:#d9d9d9;box-shadow:inset 0 0 0 1px #a3a3a3;"></div>
<div class="b" style="left:1016px;top:381px;width:171px;height:29px;background:#ffffff;box-shadow:inset 0 0 0 1px #a3a3a3;"></div>
<div class="b" style="left:1214px;top:370px;width:171px;height:29px;background:#fdc012;box-shadow:inset 0 0 0 1px #a3a3a3;"></div>
<div class="t" style="left:485.2px;top:380.6px;font-size:19.30px;color:#000;">3096B1330</div>
<div class="t" style="right:1172.2px;top:380.4px;font-size:19.50px;color:#000;">0.050</div>
<div class="t" style="right:1047.2px;top:380.4px;font-size:19.50px;color:#000;">0.000</div>
<div class="t" style="right:951.2px;top:380.4px;font-size:19.50px;color:#000;">2.050</div>
<div class="t" style="right:735.0px;top:385.0px;font-size:20.00px;color:#303030;letter-spacing:0.80px;">2</div>
<div class="t" style="right:537.0px;top:374.0px;font-size:20.00px;color:#303030;letter-spacing:0.60px;">2.00</div>
<div class="b" style="left:483px;top:423px;width:144px;height:30px;background:#d9d9d9;box-shadow:inset 0 0 0 1px #a3a3a3;"></div>
<div class="b" style="left:631px;top:423px;width:119px;height:30px;background:#d9d9d9;box-shadow:inset 0 0 0 1px #a3a3a3;"></div>
<div class="b" style="left:761px;top:423px;width:114px;height:30px;background:#d9d9d9;box-shadow:inset 0 0 0 1px #a3a3a3;"></div>
<div class="b" style="left:880px;top:423px;width:91px;height:29px;background:#d9d9d9;box-shadow:inset 0 0 0 1px #a3a3a3;"></div>
<div class="b" style="left:1016px;top:428px;width:171px;height:29px;background:#ffffff;box-shadow:inset 0 0 0 1px #a3a3a3;"></div>
<div class="b" style="left:1214px;top:417px;width:171px;height:29px;background:#fdc012;box-shadow:inset 0 0 0 1px #a3a3a3;"></div>
<div class="t" style="left:485.2px;top:427.6px;font-size:19.30px;color:#000;">3096B1340</div>
<div class="t" style="right:1172.2px;top:427.4px;font-size:19.50px;color:#000;">0.020</div>
<div class="t" style="right:1047.2px;top:427.4px;font-size:19.50px;color:#000;">0.000</div>
<div class="t" style="left:881.8px;top:427.4px;font-size:19.50px;color:#000;letter-spacing:3.60px;">######</div>
<div class="t" style="right:735.0px;top:432.0px;font-size:20.00px;color:#303030;letter-spacing:0.80px;">1000</div>
<div class="t" style="right:537.0px;top:421.0px;font-size:20.00px;color:#303030;letter-spacing:0.60px;">999.98</div>
<div class="b" style="left:483px;top:470px;width:144px;height:30px;background:#d9d9d9;box-shadow:inset 0 0 0 1px #a3a3a3;"></div>
<div class="b" style="left:631px;top:470px;width:119px;height:30px;background:#d9d9d9;box-shadow:inset 0 0 0 1px #a3a3a3;"></div>
<div class="b" style="left:761px;top:470px;width:114px;height:30px;background:#d9d9d9;box-shadow:inset 0 0 0 1px #a3a3a3;"></div>
<div class="b" style="left:880px;top:470px;width:91px;height:29px;background:#d9d9d9;box-shadow:inset 0 0 0 1px #a3a3a3;"></div>
<div class="b" style="left:1016px;top:475px;width:171px;height:29px;background:#ffffff;box-shadow:inset 0 0 0 1px #a3a3a3;"></div>
<div class="b" style="left:1214px;top:464px;width:171px;height:29px;background:#fdc012;box-shadow:inset 0 0 0 1px #a3a3a3;"></div>
<div class="t" style="left:485.2px;top:474.6px;font-size:19.30px;color:#000;">3573G1121</div>
<div class="t" style="right:1172.2px;top:474.4px;font-size:19.50px;color:#000;">0.100</div>
<div class="t" style="right:1047.2px;top:474.4px;font-size:19.50px;color:#000;">800.000</div>
<div class="t" style="right:951.2px;top:474.4px;font-size:19.50px;color:#000;">20.000</div>
<div class="t" style="right:735.0px;top:479.0px;font-size:20.00px;color:#303030;letter-spacing:0.80px;">20</div>
<div class="t" style="right:537.0px;top:468.0px;font-size:20.00px;color:#303030;letter-spacing:0.60px;">19.90</div>
<div class="b" style="left:483px;top:517px;width:144px;height:30px;background:#d9d9d9;box-shadow:inset 0 0 0 1px #a3a3a3;"></div>
<div class="b" style="left:631px;top:517px;width:119px;height:30px;background:#d9d9d9;box-shadow:inset 0 0 0 1px #a3a3a3;"></div>
<div class="b" style="left:761px;top:517px;width:114px;height:30px;background:#d9d9d9;box-shadow:inset 0 0 0 1px #a3a3a3;"></div>
<div class="b" style="left:880px;top:517px;width:91px;height:29px;background:#d9d9d9;box-shadow:inset 0 0 0 1px #a3a3a3;"></div>
<div class="b" style="left:1016px;top:522px;width:171px;height:29px;background:#ffffff;box-shadow:inset 0 0 0 1px #a3a3a3;"></div>
<div class="b" style="left:1214px;top:511px;width:171px;height:29px;background:#fdc012;box-shadow:inset 0 0 0 1px #a3a3a3;"></div>
<div class="t" style="left:485.2px;top:521.6px;font-size:19.30px;color:#000;">5036NF08BET</div>
<div class="t" style="right:1172.2px;top:521.4px;font-size:19.50px;color:#000;">10.000</div>
<div class="t" style="right:1047.2px;top:521.4px;font-size:19.50px;color:#000;">44.000</div>
<div class="t" style="right:951.2px;top:521.4px;font-size:19.50px;color:#000;">40.000</div>
<div class="t" style="right:735.0px;top:526.0px;font-size:20.00px;color:#303030;letter-spacing:0.80px;">84</div>
<div class="t" style="right:537.0px;top:515.0px;font-size:20.00px;color:#303030;letter-spacing:0.60px;">30.00</div>
<div class="b" style="left:483px;top:564px;width:144px;height:30px;background:#d9d9d9;box-shadow:inset 0 0 0 1px #a3a3a3;"></div>
<div class="b" style="left:631px;top:564px;width:119px;height:30px;background:#d9d9d9;box-shadow:inset 0 0 0 1px #a3a3a3;"></div>
<div class="b" style="left:761px;top:564px;width:114px;height:30px;background:#d9d9d9;box-shadow:inset 0 0 0 1px #a3a3a3;"></div>
<div class="b" style="left:880px;top:564px;width:91px;height:29px;background:#d9d9d9;box-shadow:inset 0 0 0 1px #a3a3a3;"></div>
<div class="b" style="left:1016px;top:569px;width:171px;height:29px;background:#ffffff;box-shadow:inset 0 0 0 1px #a3a3a3;"></div>
<div class="b" style="left:1214px;top:558px;width:171px;height:29px;background:#fdc012;box-shadow:inset 0 0 0 1px #a3a3a3;"></div>
<div class="t" style="left:485.2px;top:568.6px;font-size:19.30px;color:#000;">5036WP08BET</div>
<div class="t" style="right:1172.2px;top:568.4px;font-size:19.50px;color:#000;">10.000</div>
<div class="t" style="right:1047.2px;top:568.4px;font-size:19.50px;color:#000;">10.000</div>
<div class="t" style="right:951.2px;top:568.4px;font-size:19.50px;color:#000;">455.000</div>
<div class="t" style="right:735.0px;top:573.0px;font-size:20.00px;color:#303030;letter-spacing:0.80px;">465</div>
<div class="t" style="right:537.0px;top:562.0px;font-size:20.00px;color:#303030;letter-spacing:0.60px;">445.00</div>
<div class="b" style="left:483px;top:611px;width:144px;height:30px;background:#d9d9d9;box-shadow:inset 0 0 0 1px #a3a3a3;"></div>
<div class="b" style="left:631px;top:611px;width:119px;height:30px;background:#d9d9d9;box-shadow:inset 0 0 0 1px #a3a3a3;"></div>
<div class="b" style="left:761px;top:611px;width:114px;height:30px;background:#d9d9d9;box-shadow:inset 0 0 0 1px #a3a3a3;"></div>
<div class="b" style="left:880px;top:611px;width:91px;height:29px;background:#d9d9d9;box-shadow:inset 0 0 0 1px #a3a3a3;"></div>
<div class="b" style="left:1016px;top:616px;width:171px;height:29px;background:#ffffff;box-shadow:inset 0 0 0 1px #a3a3a3;"></div>
<div class="b" style="left:1214px;top:605px;width:171px;height:29px;background:#fdc012;box-shadow:inset 0 0 0 1px #a3a3a3;"></div>
<div class="t" style="left:485.2px;top:615.6px;font-size:19.30px;color:#000;">5036WS08PB</div>
<div class="t" style="right:1172.2px;top:615.4px;font-size:19.50px;color:#000;">10.000</div>
<div class="t" style="right:1047.2px;top:615.4px;font-size:19.50px;color:#000;">125.000</div>
<div class="t" style="right:951.2px;top:615.4px;font-size:19.50px;color:#000;">490.000</div>
<div class="t" style="right:735.0px;top:620.0px;font-size:20.00px;color:#303030;letter-spacing:0.80px;">615</div>
<div class="t" style="right:537.0px;top:609.0px;font-size:20.00px;color:#303030;letter-spacing:0.60px;">480.00</div>
<div class="b" style="left:483px;top:658px;width:144px;height:30px;background:#d9d9d9;box-shadow:inset 0 0 0 1px #a3a3a3;"></div>
<div class="b" style="left:631px;top:658px;width:119px;height:30px;background:#d9d9d9;box-shadow:inset 0 0 0 1px #a3a3a3;"></div>
<div class="b" style="left:761px;top:658px;width:114px;height:30px;background:#d9d9d9;box-shadow:inset 0 0 0 1px #a3a3a3;"></div>
<div class="b" style="left:880px;top:658px;width:91px;height:29px;background:#d9d9d9;box-shadow:inset 0 0 0 1px #a3a3a3;"></div>
<div class="b" style="left:1016px;top:663px;width:171px;height:29px;background:#ffffff;box-shadow:inset 0 0 0 1px #a3a3a3;"></div>
<div class="b" style="left:1214px;top:652px;width:171px;height:29px;background:#fdc012;box-shadow:inset 0 0 0 1px #a3a3a3;"></div>
<div class="t" style="left:485.2px;top:662.6px;font-size:19.30px;color:#000;">5096B00055</div>
<div class="t" style="right:1172.2px;top:662.4px;font-size:19.50px;color:#000;">10.000</div>
<div class="t" style="right:1047.2px;top:662.4px;font-size:19.50px;color:#000;">20.000</div>
<div class="t" style="right:951.2px;top:662.4px;font-size:19.50px;color:#000;">0.000</div>
<div class="t" style="right:735.0px;top:667.0px;font-size:20.00px;color:#303030;letter-spacing:0.80px;">10</div>
<div class="t" style="right:537.0px;top:656.0px;font-size:20.00px;color:#303030;letter-spacing:0.60px;">-10.00</div>
<div class="b" style="left:483px;top:705px;width:144px;height:30px;background:#d9d9d9;box-shadow:inset 0 0 0 1px #a3a3a3;"></div>
<div class="b" style="left:631px;top:705px;width:119px;height:30px;background:#d9d9d9;box-shadow:inset 0 0 0 1px #a3a3a3;"></div>
<div class="b" style="left:761px;top:705px;width:114px;height:30px;background:#d9d9d9;box-shadow:inset 0 0 0 1px #a3a3a3;"></div>
<div class="b" style="left:880px;top:705px;width:91px;height:29px;background:#d9d9d9;box-shadow:inset 0 0 0 1px #a3a3a3;"></div>
<div class="b" style="left:1016px;top:710px;width:171px;height:29px;background:#ffffff;box-shadow:inset 0 0 0 1px #a3a3a3;"></div>
<div class="b" style="left:1214px;top:699px;width:171px;height:29px;background:#fdc012;box-shadow:inset 0 0 0 1px #a3a3a3;"></div>
<div class="t" style="left:485.2px;top:709.6px;font-size:19.30px;color:#000;">5096B0902</div>
<div class="t" style="right:1172.2px;top:709.4px;font-size:19.50px;color:#000;">10.000</div>
<div class="t" style="right:1047.2px;top:709.4px;font-size:19.50px;color:#000;">10.000</div>
<div class="t" style="right:951.2px;top:709.4px;font-size:19.50px;color:#000;">20.000</div>
<div class="t" style="right:735.0px;top:714.0px;font-size:20.00px;color:#303030;letter-spacing:0.80px;">30</div>
<div class="t" style="right:537.0px;top:703.0px;font-size:20.00px;color:#303030;letter-spacing:0.60px;">10.00</div>
<div class="b" style="left:483px;top:752px;width:144px;height:30px;background:#d9d9d9;box-shadow:inset 0 0 0 1px #a3a3a3;"></div>
<div class="b" style="left:631px;top:752px;width:119px;height:30px;background:#d9d9d9;box-shadow:inset 0 0 0 1px #a3a3a3;"></div>
<div class="b" style="left:761px;top:752px;width:114px;height:30px;background:#d9d9d9;box-shadow:inset 0 0 0 1px #a3a3a3;"></div>
<div class="b" style="left:880px;top:752px;width:91px;height:29px;background:#d9d9d9;box-shadow:inset 0 0 0 1px #a3a3a3;"></div>
<div class="b" style="left:1016px;top:757px;width:171px;height:29px;background:#ffffff;box-shadow:inset 0 0 0 1px #a3a3a3;"></div>
<div class="b" style="left:1214px;top:746px;width:171px;height:29px;background:#fdc012;box-shadow:inset 0 0 0 1px #a3a3a3;"></div>
<div class="t" style="left:485.2px;top:756.6px;font-size:19.30px;color:#000;">5096B0903D</div>
<div class="t" style="right:1172.2px;top:756.4px;font-size:19.50px;color:#000;">10.000</div>
<div class="t" style="right:1047.2px;top:756.4px;font-size:19.50px;color:#000;">10.000</div>
<div class="t" style="right:951.2px;top:756.4px;font-size:19.50px;color:#000;">3.000</div>
<div class="t" style="right:735.0px;top:761.0px;font-size:20.00px;color:#303030;letter-spacing:0.80px;">13</div>
<div class="t" style="right:537.0px;top:750.0px;font-size:20.00px;color:#303030;letter-spacing:0.60px;">-7.00</div>
<div class="b" style="left:483px;top:799px;width:144px;height:30px;background:#d9d9d9;box-shadow:inset 0 0 0 1px #a3a3a3;"></div>
<div class="b" style="left:631px;top:799px;width:119px;height:30px;background:#d9d9d9;box-shadow:inset 0 0 0 1px #a3a3a3;"></div>
<div class="b" style="left:761px;top:799px;width:114px;height:30px;background:#d9d9d9;box-shadow:inset 0 0 0 1px #a3a3a3;"></div>
<div class="b" style="left:880px;top:799px;width:91px;height:29px;background:#d9d9d9;box-shadow:inset 0 0 0 1px #a3a3a3;"></div>
<div class="b" style="left:1016px;top:804px;width:171px;height:29px;background:#ffffff;box-shadow:inset 0 0 0 1px #a3a3a3;"></div>
<div class="b" style="left:1214px;top:793px;width:171px;height:29px;background:#fdc012;box-shadow:inset 0 0 0 1px #a3a3a3;"></div>
<div class="t" style="left:485.2px;top:803.6px;font-size:19.30px;color:#000;">7505048-01</div>
<div class="t" style="right:1172.2px;top:803.4px;font-size:19.50px;color:#000;">0.132</div>
<div class="t" style="right:1047.2px;top:803.4px;font-size:19.50px;color:#000;">0.132</div>
<div class="t" style="right:951.2px;top:803.4px;font-size:19.50px;color:#000;">12.193</div>
<div class="t" style="right:735.0px;top:808.0px;font-size:20.00px;color:#303030;letter-spacing:0.80px;">12.325</div>
<div class="t" style="right:537.0px;top:797.0px;font-size:20.00px;color:#303030;letter-spacing:0.60px;">12.06</div>
<div class="b" style="left:483px;top:846px;width:144px;height:30px;background:#d9d9d9;box-shadow:inset 0 0 0 1px #a3a3a3;"></div>
<div class="b" style="left:631px;top:846px;width:119px;height:30px;background:#d9d9d9;box-shadow:inset 0 0 0 1px #a3a3a3;"></div>
<div class="b" style="left:761px;top:846px;width:114px;height:30px;background:#d9d9d9;box-shadow:inset 0 0 0 1px #a3a3a3;"></div>
<div class="b" style="left:880px;top:846px;width:91px;height:29px;background:#d9d9d9;box-shadow:inset 0 0 0 1px #a3a3a3;"></div>
<div class="b" style="left:1016px;top:851px;width:171px;height:29px;background:#ffffff;box-shadow:inset 0 0 0 1px #a3a3a3;"></div>
<div class="b" style="left:1214px;top:840px;width:171px;height:29px;background:#fdc012;box-shadow:inset 0 0 0 1px #a3a3a3;"></div>
<div class="t" style="left:485.2px;top:850.6px;font-size:19.30px;color:#000;">7505050-02</div>
<div class="t" style="right:1172.2px;top:850.4px;font-size:19.50px;color:#000;">0.137</div>
<div class="t" style="right:1047.2px;top:850.4px;font-size:19.50px;color:#000;">0.137</div>
<div class="t" style="right:951.2px;top:850.4px;font-size:19.50px;color:#000;">24.288</div>
<div class="t" style="right:735.0px;top:855.0px;font-size:20.00px;color:#303030;letter-spacing:0.80px;">24.425</div>
<div class="t" style="right:537.0px;top:844.0px;font-size:20.00px;color:#303030;letter-spacing:0.60px;">24.15</div>
<div class="b" style="left:1443px;top:101px;width:25px;height:785px;background:#f2f2f2;"></div>
<div class="b" style="left:1443px;top:101px;width:25px;height:25px;background:#ffffff;box-shadow:inset 0 0 0 1px #8a8a8a;"></div>
<svg style="left:1443px;top:101px" width="25" height="25" viewBox="0 0 25 25"><path d="M7 15 h11 l-5.5 -5.5 z" fill="#1a1a1a"/></svg>
<div class="b" style="left:1443px;top:126px;width:25px;height:551px;background:#ffffff;box-shadow:inset 0 0 0 1px #8a8a8a;"></div>
<div class="b" style="left:1443px;top:861px;width:25px;height:25px;background:#ffffff;box-shadow:inset 0 0 0 1px #8a8a8a;"></div>
<svg style="left:1443px;top:861px" width="25" height="25" viewBox="0 0 25 25"><path d="M7 10 h11 l-5.5 5.5 z" fill="#1a1a1a"/></svg>
<div class="b" style="left:0px;top:987px;width:1920px;height:1px;background:#d4d4d4;"></div>
<div class="b" style="left:0px;top:988px;width:1920px;height:32px;background:#f3f2f1;"></div>
<div class="t" style="left:11.9px;top:997.5px;font-size:15.00px;color:#4a4a4a;letter-spacing:0.40px;">Form View</div>
<div class="t" style="left:1734.4px;top:997.3px;font-size:15.20px;color:#4a4a4a;letter-spacing:-0.20px;">Caps Lock</div>
<div class="t" style="left:1826.7px;top:997.1px;font-size:15.50px;color:#4a4a4a;">Num Lock</div>
<div class="b" style="left:0px;top:1020px;width:1920px;height:60px;background:linear-gradient(90deg,#22363f 0%,#213440 50%,#1c2a3f 100%);"></div>
<div class="b" style="left:72px;top:1020px;width:432px;height:60px;background:#f2f2f2;"></div>
<div class="b" style="left:72px;top:1020px;width:432px;height:2px;background:#c5c5c5;"></div>
<div class="b" style="left:72px;top:1020px;width:2px;height:60px;background:#c5c5c5;"></div>
<div class="b" style="left:504px;top:1020px;width:1px;height:60px;background:#1f313b;"></div>
<svg style="left:0;top:1020px" width="72" height="60" viewBox="0 0 72 60">
<g fill="#ffffff"><path d="M24 20.5 L34.3 19 V29.3 H24 Z"/><path d="M35.6 18.8 L48 17 V29.3 H35.6 Z"/><path d="M24 30.6 H34.3 V40.9 L24 39.4 Z"/><path d="M35.6 30.6 H48 V43 L35.6 41.2 Z"/></g>
</svg>
<svg style="left:80px;top:1030px" width="40" height="40" viewBox="0 0 40 40">
<circle cx="25.7" cy="15.9" r="7.4" fill="none" stroke="#111" stroke-width="1.6"/><line x1="20.5" y1="21.1" x2="10" y2="31.5" stroke="#111" stroke-width="1.7"/>
</svg>
<div class="t" style="left:132.7px;top:1040.7px;font-size:22.20px;color:#1c1c1c;">Type here to search</div>
<svg style="left:380px;top:1020px" width="124" height="60" viewBox="0 0 124 60">
<defs>
<linearGradient id="scr" x1="0" y1="0" x2="0" y2="1"><stop offset="0" stop-color="#a6c4ea"/><stop offset="0.45" stop-color="#ece6f0"/><stop offset="0.62" stop-color="#bfc6d0"/><stop offset="1" stop-color="#aaa6b4"/></linearGradient>
<radialGradient id="bag" cx="0.45" cy="0.25" r="0.85"><stop offset="0" stop-color="#cf8a62"/><stop offset="0.6" stop-color="#a85a34"/><stop offset="1" stop-color="#7e3a1c"/></radialGradient>
<linearGradient id="shf" x1="0" y1="0" x2="0" y2="1"><stop offset="0" stop-color="#eeeae4"/><stop offset="1" stop-color="#dcd4c6"/></linearGradient>
</defs>
<path d="M4 51.5 L12 45.4 L116 45.4 L123 51.5 V60 H4 Z" fill="url(#shf)"/>
<path d="M8.8 9.2 L44.7 12.6 L50.1 42.3 L14.2 45.4 Z" fill="#2e3350"/>
<path d="M10.3 10.8 L43.4 14 L48.5 41 L15.2 43.8 Z" fill="url(#scr)"/>
<path d="M13 26.5 C 18 24.5, 24 25.5, 28 27 C 33 25, 38 23, 46 25.5 L47 30 C 40 31, 33 30, 28 30.5 C 22 31.5, 17 30.5, 13.5 30 Z" fill="#5f7f94"/>
<path d="M30.5 30 C 36 28.5, 42 28.5, 46.5 29 L48 38 C 44 37, 40 34, 36 33 C 33 32, 31.5 31, 30.5 30 Z" fill="#dcb48e"/>
<path d="M14.2 45.4 L50.1 42.3 L78.5 45.4 L44.7 49.3 Z" fill="#3a3f5c"/>
<path d="M76 14 C 78 4, 98 4, 100.5 14" fill="none" stroke="#b0683a" stroke-width="2.2"/>
<rect x="73.8" y="12" width="3.6" height="4.5" rx="1" fill="#e9b45c"/><rect x="98.8" y="12" width="3.6" height="4.5" rx="1" fill="#e9b45c"/>
<rect x="64" y="14" width="47.7" height="31.7" rx="3" fill="url(#bag)"/>
<path d="M64 23.4 Q 88 32 111.7 23.4" fill="none" stroke="#5a2a12" stroke-width="1.1"/>
<rect x="82.3" y="27.1" width="11.5" height="8.5" rx="2" fill="#eab35f"/><rect x="82.3" y="31" width="11.5" height="0.9" fill="#c98b3a"/>
</svg>
<svg style="left:520px;top:1025px" width="520" height="55" viewBox="0 0 520 55">
<defs>
<linearGradient id="sk" x1="0" y1="0" x2="1" y2="1"><stop offset="0" stop-color="#1cb7ee"/><stop offset="1" stop-color="#0b80d0"/></linearGradient>
<linearGradient id="ol" x1="0" y1="0" x2="1" y2="1"><stop offset="0" stop-color="#36c5f5"/><stop offset="1" stop-color="#0a5fb4"/></linearGradient>
<linearGradient id="ed" x1="0" y1="0" x2="1" y2="0.6"><stop offset="0" stop-color="#1aa3ea"/><stop offset="0.5" stop-color="#2cc0c8"/><stop offset="1" stop-color="#5fd660"/></linearGradient>
<linearGradient id="ac" x1="0" y1="0" x2="0" y2="1"><stop offset="0" stop-color="#d8687a"/><stop offset="1" stop-color="#8e1a2a"/></linearGradient>
<linearGradient id="fd" x1="0" y1="0" x2="0" y2="1"><stop offset="0" stop-color="#ffd96e"/><stop offset="1" stop-color="#f9c847"/></linearGradient>
<linearGradient id="ed2" x1="0" y1="0" x2="1" y2="1"><stop offset="0" stop-color="#1284d8"/><stop offset="1" stop-color="#0b4a98"/></linearGradient>
<linearGradient id="rg" x1="0" y1="0" x2="1" y2="1"><stop offset="0" stop-color="#f4f4f4"/><stop offset="1" stop-color="#9c9490"/></linearGradient>
</defs>
<circle cx="15.5" cy="15" r="6" fill="#0aa6dc"/><circle cx="34" cy="33.5" r="6" fill="#0a8fd0"/><circle cx="24.9" cy="24.4" r="15.6" fill="url(#sk)"/>
<text x="24.9" y="32" text-anchor="middle" font-family="Liberation Sans" font-weight="bold" font-size="21" fill="#fff" transform="translate(24.9 0) scale(0.88 1) translate(-24.9 0)">S</text>
<rect x="92" y="9.1" width="25" height="22" rx="1.2" fill="#0a64b8"/><rect x="100.3" y="14.6" width="7.8" height="6.2" fill="#28a8ea"/><rect x="108.1" y="14.6" width="8.9" height="6.2" fill="#50d9ff"/><rect x="100.3" y="20.8" width="7.8" height="6.2" fill="#0078d4"/><rect x="108.1" y="20.8" width="8.9" height="6.2" fill="#28a8ea"/><rect x="92" y="14.6" width="8.3" height="12.4" fill="#0364b8"/>
<path d="M90.5 25 L103.5 34 L117 25 V39.5 a1.3 1.3 0 0 1 -1.3 1.3 H91.8 a1.3 1.3 0 0 1 -1.3 -1.3 Z" fill="#28a8ea"/><path d="M90.5 40.8 L103.5 32 L117 40.8 Z" fill="#1490df"/>
<rect x="81.9" y="15.9" width="18.1" height="18" rx="1.5" fill="#1066c7"/><ellipse cx="90.9" cy="24.9" rx="4" ry="4.9" fill="none" stroke="#fff" stroke-width="2"/>
<path d="M159.5 12 h12.5 l2.5 2.5 h16 v10 h-31 z" fill="#e2a20f"/><rect x="158.8" y="15.5" width="32.2" height="21.7" rx="1.2" fill="url(#fd)"/><path d="M164.3 38.5 V27 a1 1 0 0 1 1 -1 h18.7 a1 1 0 0 1 1 1 V38.5 h-5 V31.2 h-10.7 V38.5 z" fill="#3d95e0"/>
<circle cx="250.3" cy="25" r="18" fill="url(#ed)"/><path d="M232.3 26 A18 18 0 0 0 266.5 33.5 C 262 38.5, 252 39.5, 246.5 35 C 240.5 30, 241 20, 250 18.5 C 243 15, 233 19, 232.3 26 Z" fill="url(#ed2)"/><ellipse cx="253.6" cy="25.2" rx="6.2" ry="5.8" fill="#22363f"/><path d="M253.6 31 C 258 31.5, 262 30, 268 28 L 268 22 C 264 20, 259.5 21, 259.8 25.2 Z" fill="#4bcf6e"/>
<circle cx="324.9" cy="25" r="16" fill="url(#rg)" stroke="#f2f2f2" stroke-width="1.3"/><path d="M309.3 28 C 316 26, 326 24.5, 339.8 17.5 A15.6 15.6 0 0 0 309.3 28 Z" fill="#ee2630"/><path d="M309.5 28.5 C 316 26.5, 326 25, 340 18" fill="none" stroke="#ffffff" stroke-width="1.6"/><rect x="317" y="29" width="7.5" height="6.5" fill="#f04a55"/><path d="M318.5 29 v-2.8 a2.25 2.25 0 0 1 4.5 0 v2.8" fill="none" stroke="#f02a34" stroke-width="1.6"/>
<rect x="390.2" y="9.1" width="26.9" height="31.6" rx="1.5" fill="#185c37"/><rect x="390.2" y="9.1" width="26.9" height="16" rx="1.5" fill="#21a366"/><rect x="403.7" y="9.1" width="13.4" height="8" fill="#33c481"/><rect x="390.2" y="25.1" width="26.9" height="7.5" fill="#107c41"/>
<rect x="382" y="16" width="17.8" height="18" rx="1.5" fill="#107c41"/><text x="390.9" y="30" text-anchor="middle" font-family="Liberation Sans" font-weight="bold" font-size="13.5" fill="#fff">X</text>
</svg>
<div class="b" style="left:959px;top:1020px;width:66px;height:60px;background:#4a5a65;"></div>
<div class="b" style="left:1025px;top:1020px;width:7px;height:60px;background:#3a4752;"></div>
<div class="b" style="left:890px;top:1077px;width:62px;height:3px;background:#78b8ea;"></div>
<div class="b" style="left:959px;top:1077px;width:73px;height:3px;background:#78b8ea;"></div>
<svg style="left:970px;top:1025px" width="50" height="50" viewBox="0 0 50 50">
<rect x="15.2" y="25" width="26.8" height="11.5" fill="#8f1726"/><ellipse cx="28.6" cy="36.5" rx="13.4" ry="4.6" fill="#8f1726"/>
<rect x="15.2" y="17.5" width="26.8" height="7.5" fill="#b72134"/><ellipse cx="28.6" cy="25" rx="13.4" ry="4.6" fill="#b72134"/>
<rect x="15.2" y="12.4" width="26.8" height="5.1" fill="#cd4f62"/><ellipse cx="28.6" cy="17.5" rx="13.4" ry="4.6" fill="#cd4f62"/>
<ellipse cx="28.6" cy="12.4" rx="13.4" ry="4.6" fill="#e07e8e"/>
<rect x="7" y="16" width="18.2" height="17.8" rx="1.5" fill="#c0283a"/><text x="16.1" y="30" text-anchor="middle" font-family="Liberation Sans" font-weight="bold" font-size="14" fill="#fff">A</text>
</svg>
<svg style="left:1295px;top:1025px" width="50" height="50" viewBox="0 0 50 50">
<defs><linearGradient id="cl" x1="0" y1="0" x2="0" y2="1"><stop offset="0" stop-color="#e6eefa"/><stop offset="1" stop-color="#a9c3ea"/></linearGradient>
<linearGradient id="sn" x1="0" y1="0" x2="1" y2="1"><stop offset="0" stop-color="#f7c533"/><stop offset="1" stop-color="#ef7a12"/></linearGradient></defs>
<circle cx="31.6" cy="19.3" r="9" fill="url(#sn)"/><circle cx="37.4" cy="11.2" r="4.6" fill="#c9261d"/>
<path d="M13 42 a7.5 7.5 0 0 1 -1 -14.8 a11 11 0 0 1 20.5 -2 a8 8 0 0 1 9.5 9 a7.5 7.5 0 0 1 -4 7.8 z" fill="url(#cl)"/>
</svg>
<div class="t" style="left:1350.0px;top:1042.4px;font-size:20.80px;color:#ffffff;">12°C  Mostly cloudy</div>
<svg style="left:1560px;top:1030px" width="120" height="40" viewBox="0 0 120 40">
<path d="M14 24.5 L22.5 15 L31 24.5" fill="none" stroke="#fff" stroke-width="1.5"/>
<g fill="none" stroke="#fff" stroke-width="1.4"><path d="M51 29 a18 18 0 0 1 17 -17"/><path d="M55 29 a14 14 0 0 1 13 -13" opacity="0.6"/><path d="M59 29 a10 10 0 0 1 9 -9" opacity="0.6"/></g><circle cx="67" cy="28.5" r="1.5" fill="#fff"/>
<g fill="none" stroke="#fff" stroke-width="1.3"><path d="M88.5 18 V14.5 H105 V27 H88.5"/><path d="M83 11 v4 M87 11 v4 M82 15 h6 v4 a3 3 0 0 1 -6 0 z M85 22 v5"/><line x1="106" y1="19" x2="106" y2="22.5"/></g>
</svg>
<div class="t" style="left:1682.9px;top:1041.7px;font-size:17.70px;color:#ffffff;transform:scaleX(0.845);transform-origin:0 0;">ENG</div>
<div class="t" style="left:1761.0px;top:1028.4px;font-size:17.60px;color:#ffffff;">08:28</div>
<div class="t" style="left:1736.0px;top:1056.0px;font-size:18.60px;color:#ffffff;">05/05/2023</div>
<svg style="left:1850px;top:1020px" width="70" height="60" viewBox="0 0 70 60">
<path d="M8 18 h24 v17 h-6 l-7 4 l-5 -4 h-6 z" fill="#fff"/><g stroke="#1e2a40" stroke-width="1.1"><line x1="13" y1="23" x2="28" y2="23"/><line x1="13" y1="27" x2="28" y2="27"/><line x1="13" y1="31" x2="23" y2="31"/></g>
<circle cx="29" cy="36" r="6" fill="#1e2a40"/><path d="M31 30.5 a5.2 5.2 0 1 1 -6.5 7 a4.5 4.5 0 0 0 6.5 -7 z" fill="none" stroke="#fff" stroke-width="1.2"/>
<rect x="62.5" y="0" width="1.5" height="60" fill="#7c8696"/>
</svg>
</body></html>
